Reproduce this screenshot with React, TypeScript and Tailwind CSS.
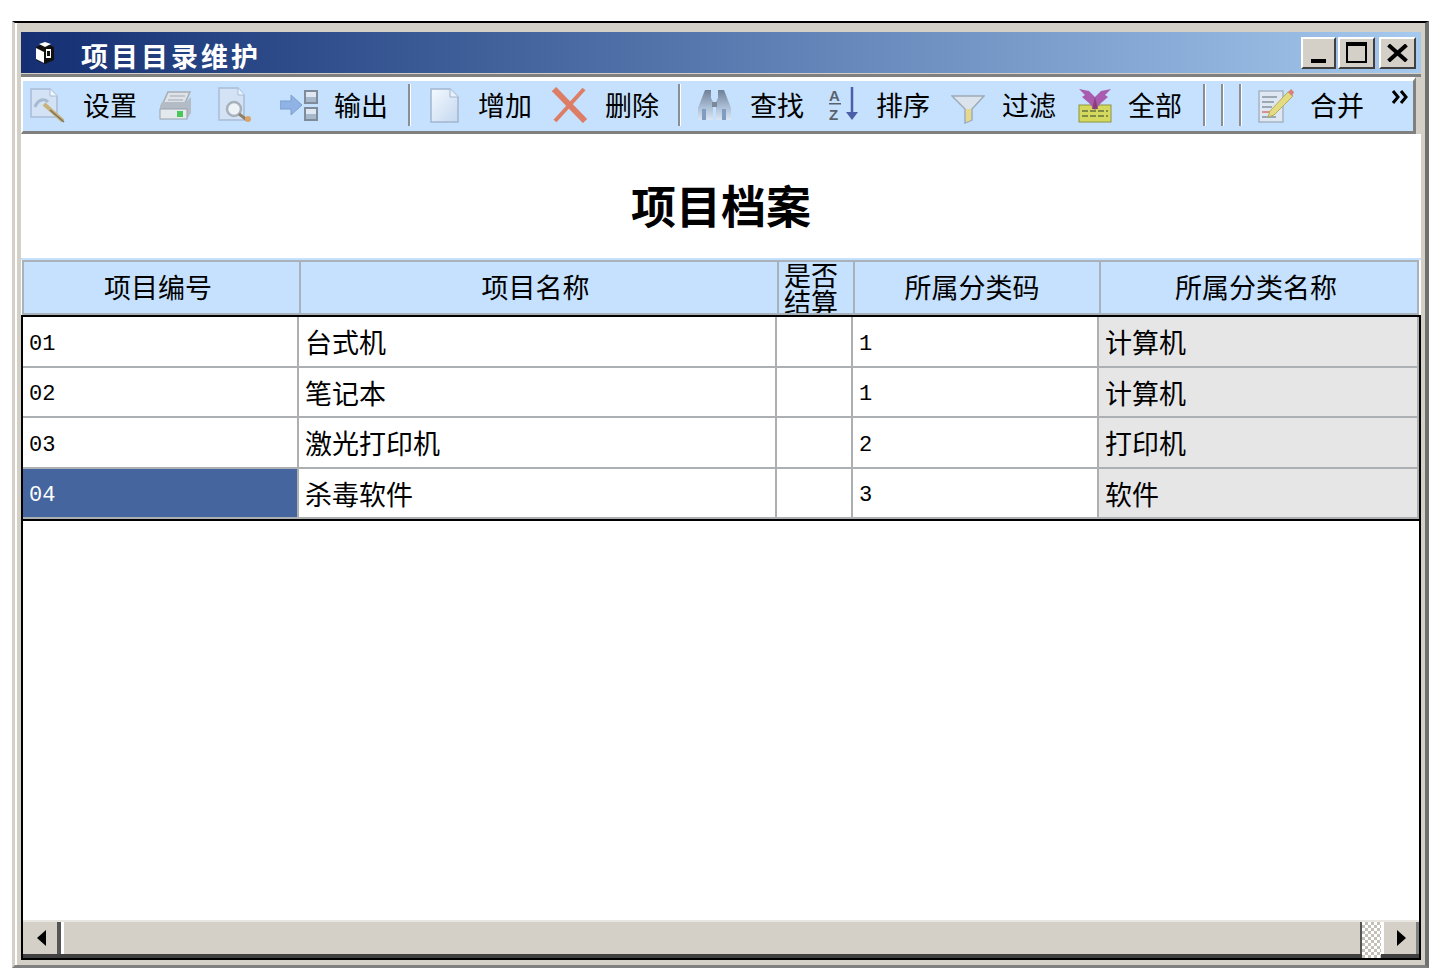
import React from "react";

const cjk = { fontFamily: '"Noto Sans CJK SC", "Liberation Sans", sans-serif' };

const Sep = ({ ml }: { ml: string }) => (
    <div className={`w-[3px] h-[42px] shrink-0 bg-[#8a8f96] border-r border-r-white -translate-y-[1px] ${ml}`} />
);

const Label = ({ ml, children }: { ml: string; children: React.ReactNode }) => (
    <span className={`text-[27px] leading-none w-[54px] shrink-0 text-black whitespace-nowrap -translate-y-[2px] ${ml}`}>{children}</span>
);

// 工具栏图标
const SetupIcon = () => (
    <svg viewBox="0 0 36 36" className="w-[36px] h-[36px] shrink-0 ml-[7px] -translate-y-[1px]">
        <path d="M1 2h19l7 7v21H1z" fill="#d3e3f5" stroke="#a9bcd6" strokeWidth="1.5" />
        <path d="M20 2v7h7" fill="#eef5fc" stroke="#a9bcd6" />
        <path d="M5 20c3-8 10-9 13-5" fill="none" stroke="#a8bad0" strokeWidth="3" />
        <path d="M14 17l19 17" stroke="#c7b27a" strokeWidth="4" />
        <path d="M20 23l14 12" stroke="#7a6f5a" strokeWidth="1.5" />
    </svg>
);

const PrinterIcon = () => (
    <svg viewBox="0 0 36 36" className="w-[36px] h-[36px] shrink-0 ml-[20px] -translate-y-[1px]">
        <path d="M11 5h22l-5 11H6z" fill="#dfe3e8" stroke="#a5adb6" strokeWidth="1.5" />
        <path d="M13 9h15M11 13h15" stroke="#b6bdc5" strokeWidth="1.5" />
        <path d="M5 15h24l5-5v16l-4 6H3V19z" fill="#b3bbc4" />
        <rect x="3" y="22" width="27" height="10" fill="#e4e9ee" stroke="#9aa3ad" />
        <rect x="20" y="24" width="6" height="6" fill="#4cc55a" />
    </svg>
);

const PreviewIcon = () => (
    <svg viewBox="0 0 36 36" className="w-[36px] h-[36px] shrink-0 ml-[25px] -translate-y-[1px]">
        <path d="M1 1h19l6 7v25H1z" fill="#d3e3f5" stroke="#a9bcd6" strokeWidth="1.5" />
        <path d="M20 1v7h6" fill="#eef5fc" stroke="#a9bcd6" />
        <circle cx="16" cy="22" r="7" fill="#eef3f8" stroke="#a7b1bc" strokeWidth="2.5" />
        <path d="M21 27l8 6" stroke="#8d7f68" strokeWidth="3" />
        <circle cx="30" cy="32" r="3" fill="#d9a36a" />
    </svg>
);

const ExportIcon = () => (
    <svg viewBox="0 0 38 36" className="w-[38px] h-[36px] shrink-0 ml-[26px] -translate-y-[1px]">
        <path d="M0 14h11V8l11 10-11 10v-6H0z" fill="#8fb3e4" stroke="#7f9ed0" />
        <rect x="25" y="4" width="12" height="12" fill="#dfe8f2" stroke="#7f8b98" strokeWidth="2" />
        <rect x="25" y="21" width="12" height="12" fill="#dfe8f2" stroke="#7f8b98" strokeWidth="2" />
        <rect x="26" y="10" width="10" height="5" fill="#a6b8cc" />
        <rect x="26" y="27" width="10" height="5" fill="#a6b8cc" />
    </svg>
);

const NewIcon = () => (
    <svg viewBox="0 0 30 36" className="w-[30px] h-[36px] shrink-0 ml-[19px] -translate-y-[1px]">
        <defs>
            <linearGradient id="newDoc" x1="0" y1="0" x2="1" y2="1">
                <stop offset="0" stopColor="#f4f9ff" />
                <stop offset="1" stopColor="#c4d8ef" />
            </linearGradient>
        </defs>
        <path d="M1 2h19l8 8v25H1z" fill="url(#newDoc)" stroke="#a3b6cf" strokeWidth="1.5" />
        <path d="M20 2v8h8" fill="#e8f1fb" stroke="#a3b6cf" />
    </svg>
);

const DeleteIcon = () => (
    <svg viewBox="0 0 36 36" className="w-[36px] h-[36px] shrink-0 ml-[20px] -translate-y-[1px]">
        <path d="M2 2l31 32" stroke="#dd7d66" strokeWidth="6" />
        <path d="M32 2L3 34" stroke="#dd7d66" strokeWidth="4" />
    </svg>
);

const FindIcon = () => (
    <svg viewBox="0 0 35 36" className="w-[35px] h-[36px] shrink-0 ml-[16px] -translate-y-[1px]">
        <defs>
            <linearGradient id="binoBody" x1="0" y1="0" x2="0" y2="1">
                <stop offset="0" stopColor="#6f8197" />
                <stop offset="0.55" stopColor="#a8bcd4" />
                <stop offset="1" stopColor="#dbe6f2" />
            </linearGradient>
        </defs>
        <path d="M8 3h6v8l2 4v18H1V21z" fill="url(#binoBody)" />
        <path d="M21 3h6l7 18v12H19V15l2-4z" fill="url(#binoBody)" />
        <path d="M5 22h4v11H5zM25 22h4v11h-4z" fill="#7f9cc2" />
        <rect x="15" y="15" width="5" height="5" fill="#7a889a" />
    </svg>
);

const SortIcon = () => (
    <svg viewBox="0 0 33 36" className="w-[33px] h-[36px] shrink-0 ml-[23px] -translate-y-[1px]">
        <text x="2" y="14" fontSize="15" fontWeight="700" fill="#59626c" fontFamily="Liberation Sans">A</text>
        <rect x="2" y="16" width="12" height="1.5" fill="#59626c" />
        <text x="2" y="33" fontSize="15" fontWeight="700" fill="#59626c" fontFamily="Liberation Sans">Z</text>
        <path d="M25 0v26" stroke="#4b5ea8" strokeWidth="2.5" />
        <path d="M19 25h12l-6 8z" fill="#4b5ea8" />
    </svg>
);

const FilterIcon = () => (
    <svg viewBox="0 0 34 36" className="w-[34px] h-[36px] shrink-0 ml-[21px]">
        <path d="M1 8h32L21 21v11l-7 3V21z" fill="#dbe4ec" stroke="#9eabb8" strokeWidth="1.5" />
        <path d="M15 21h5v11l-5 2z" fill="#e6d98a" />
    </svg>
);

const AllIcon = () => (
    <svg viewBox="0 0 34 36" className="w-[34px] h-[36px] shrink-0 ml-[22px] -translate-y-[1px]">
        <rect x="1" y="18" width="32" height="17" fill="#d4d95e" stroke="#8d9440" />
        <path d="M4 24h26M4 29h26" stroke="#7f8c46" strokeWidth="2" strokeDasharray="6 2" />
        <path d="M1 2l10 2 6 6 6-6 10-2-6 6 3 2-7 6-6 7-6-7-7-6 3-2z" fill="#a95bb0" />
        <path d="M17 10l3 12h-6z" fill="#8a3f7a" />
    </svg>
);

const MergeIcon = () => (
    <svg viewBox="0 0 36 36" className="w-[36px] h-[36px] shrink-0 ml-[16px] -translate-y-[1px]">
        <path d="M1 4h24v31H1z" fill="#dfe8f2" stroke="#a5b4c4" strokeWidth="1.5" />
        <path d="M4 10h15M4 15h12M4 20h10" stroke="#9ba8b6" strokeWidth="2" />
        <path d="M4 25h14" stroke="#d88f8f" strokeWidth="2" />
        <path d="M4 30h14" stroke="#9ba8b6" strokeWidth="2" />
        <path d="M12 24L30 5l5 4-19 19-6 2z" fill="#e4dc83" stroke="#b5ad5a" />
        <path d="M30 5l3-3 3 3-2 4z" fill="#d9807a" />
    </svg>
);

const WinBtn = ({ ml, children }: { ml?: string; children: React.ReactNode }) => (
    <div className={`h-[32px] flex items-center justify-center bg-[#d4d0c8] border-2 border-t-white border-l-white border-r-[#404040] border-b-[#404040] ${ml ?? ""}`}>
        {children}
    </div>
);

const headers = [
    { name: "项目编号", cls: "pr-[7px] pb-[3px]" },
    { name: "项目名称", cls: "pr-[7px] pb-[3px]" },
    { name: "是否 结算", cls: "pr-[10px]" },
    { name: "所属分类码", cls: "pr-[10px] pb-[3px]" },
    { name: "所属分类名称", cls: "pr-[6px] pb-[3px]" },
];

const rows = [
    { code: "01", name: "台式机", cat: "1", catName: "计算机", h: "h-[51px]" },
    { code: "02", name: "笔记本", cat: "1", catName: "计算机", h: "h-[50px]" },
    { code: "03", name: "激光打印机", cat: "2", catName: "打印机", h: "h-[51px]" },
    { code: "04", name: "杀毒软件", cat: "3", catName: "软件", h: "h-[50px]" },
];

const Cell = ({ className, children }: { className?: string; children?: React.ReactNode }) => (
    <div className={`flex items-center pl-[6px] border-r-2 border-b-2 border-[#adb0b3] overflow-hidden ${className ?? ""}`}>
        {children}
    </div>
);

const Code = ({ children }: { children: React.ReactNode }) => (
    <span className="text-[22px] leading-none translate-y-[3px]" style={{ fontFamily: '"Liberation Mono", monospace' }}>{children}</span>
);

const App = () => {
    return (
        <div className="w-[1442px] h-[980px] bg-white pt-[21px] pl-[12px] text-black" style={cjk}>
            <div className="w-[1417px] h-[947px] flex flex-col bg-[#d4d0c8] border-t-2 border-t-black border-l-[3px] border-l-[#d4d0c8] border-r-4 border-r-[#707070] border-b-[3px] border-b-[#808080]">
                <div className="flex-1 min-h-0 flex flex-col border-l-2 border-l-white pl-[4px] pr-[4px] pt-[9px] pb-[5px]">
                    {/* 标题栏 */}
                    <div className="h-[41px] shrink-0 flex items-center pl-[12px] pr-[5px] bg-gradient-to-r from-[#152f72] to-[#a6c9ee]">
                        <svg viewBox="0 0 24 24" className="w-[24px] h-[24px] shrink-0">
                            <path d="M3 6l9-4 9 4v13l-9 4-9-4z" fill="#111" />
                            <path d="M3 7l8 4v11l-8-4zM6 3l6-2 6 2-6 3z" fill="#fff" />
                            <path d="M13 8h5v9h-5z" fill="#fff" />
                            <path d="M14 10h3v5h-3z" fill="#111" />
                        </svg>
                        <span className="ml-[24px] text-[27px] leading-none font-bold tracking-[3px] text-white whitespace-nowrap translate-y-[3px]">项目目录维护</span>
                        <div className="ml-auto flex">
                            <WinBtn>
                                <div className="w-[35px] h-[32px] -m-[2px] flex items-end justify-center pb-[6px]">
                                    <div className="w-[15px] h-[4px] bg-black" />
                                </div>
                            </WinBtn>
                            <WinBtn ml="ml-[2px]">
                                <div className="w-[33px] flex justify-center">
                                    <div className="w-[21px] h-[21px] border-2 border-t-4 border-black" />
                                </div>
                            </WinBtn>
                            <WinBtn ml="ml-[4px]">
                                <svg viewBox="0 0 22 18" className="w-[33px] h-[18px] px-[5px]">
                                    <path d="M2 1l18 16M20 1L2 17" stroke="#000" strokeWidth="4" />
                                </svg>
                            </WinBtn>
                        </div>
                    </div>
                    <div className="h-[3px] shrink-0 bg-[#808080] mt-[1px]" />

                    {/* 工具栏 */}
                    <div className="h-[57px] shrink-0 w-[1395px] flex items-center bg-[#c5e1fd] border-t-4 border-t-white border-l-2 border-l-white border-r-[3px] border-r-[#808080] border-b-[3px] border-b-[#808080]">
                        <SetupIcon />
                        <Label ml="ml-[17px]">设置</Label>
                        <PrinterIcon />
                        <PreviewIcon />
                        <ExportIcon />
                        <Label ml="ml-[16px]">输出</Label>
                        <Sep ml="ml-[20px]" />
                        <NewIcon />
                        <Label ml="ml-[18px]">增加</Label>
                        <DeleteIcon />
                        <Label ml="ml-[17px]">删除</Label>
                        <Sep ml="ml-[19px]" />
                        <FindIcon />
                        <Label ml="ml-[18px]">查找</Label>
                        <SortIcon />
                        <Label ml="ml-[16px]">排序</Label>
                        <FilterIcon />
                        <Label ml="ml-[17px]">过滤</Label>
                        <AllIcon />
                        <Label ml="ml-[16px]">全部</Label>
                        <Sep ml="ml-[21px]" />
                        <Sep ml="ml-[15px]" />
                        <Sep ml="ml-[15px]" />
                        <MergeIcon />
                        <Label ml="ml-[16px]">合并</Label>
                        <svg viewBox="0 0 18 14" className="w-[18px] h-[14px] shrink-0 ml-[27px] self-start mt-[9px]">
                            <path d="M2 1l5 6-5 6M10 1l5 6-5 6" fill="none" stroke="#000" strokeWidth="3" />
                        </svg>
                    </div>

                    {/* 内容 */}
                    <div className="flex-1 min-h-0 flex flex-col bg-white">
                        <div className="h-[124px] shrink-0 flex items-center justify-center pt-[16px]">
                            <h1 className="text-[45px] leading-none font-bold">项目档案</h1>
                        </div>

                        {/* 表头 */}
                        <div className="h-[57px] shrink-0 pl-[1px] pr-[2px] border-t-2 border-t-[#c5e1fd]">
                            <div className="h-[55px] grid grid-cols-[277px_478px_76px_246px_1fr] bg-[#c5e1fd] border-t-2 border-l-2 border-r-2 border-b-2 border-[#a9b1b9]">
                                {headers.map((h, i) => (
                                    <div
                                        key={h.name}
                                        className={`flex items-center justify-center overflow-hidden text-[27px] ${h.cls} ${i < 4 ? "border-r-2 border-[#a9b1b9]" : ""}`}
                                    >
                                        {i === 2 ? (
                                            <div className="w-[54px] shrink-0 text-center leading-[27px]">是否<br />结算</div>
                                        ) : (
                                            <span className="leading-none whitespace-nowrap">{h.name}</span>
                                        )}
                                    </div>
                                ))}
                            </div>
                        </div>

                        {/* 表格 */}
                        <div className="flex-1 min-h-0 flex flex-col border-2 border-black">
                            <div className="flex-1 min-h-0">
                                <div className="border-b-2 border-black">
                                    {rows.map((row, i) => (
                                        <div key={row.code} className={`grid grid-cols-[276px_478px_76px_246px_1fr] text-[27px] ${row.h}`}>
                                            <Cell className={i === 3 ? "bg-[#44659d] text-white" : ""}><Code>{row.code}</Code></Cell>
                                            <Cell><span className="leading-none whitespace-nowrap">{row.name}</span></Cell>
                                            <Cell />
                                            <Cell><Code>{row.cat}</Code></Cell>
                                            <Cell className="bg-[#e6e6e6] border-r-0"><span className="leading-none whitespace-nowrap">{row.catName}</span></Cell>
                                        </div>
                                    ))}
                                </div>
                            </div>

                            {/* 滚动条 */}
                            <div className="h-[38px] shrink-0 flex bg-[#d4d0c8] border-t-2 border-t-[#e8e6e0] border-b-4 border-b-[#404040] pl-[3px]">
                                <div className="w-[31px] flex items-center justify-center">
                                    <svg viewBox="0 0 9 16" className="w-[9px] h-[16px]"><path d="M9 0v16L0 8z" fill="#000" /></svg>
                                </div>
                                <div className="w-[4px] bg-[#555]" />
                                <div className="w-[1301px] border-l-[3px] border-l-white border-r-2 border-r-[#555]" />
                                <div className="flex-1 min-w-0 flex">
                                    <div className="w-[19px] -mb-[4px] bg-[length:6px_6px] bg-[conic-gradient(#c4c0b8_25%,#ffffff_0_50%,#c4c0b8_0_75%,#ffffff_0)]" />
                                    <div className="flex-1 flex items-center justify-center border-l-[3px] border-l-white border-r-[3px] border-r-[#808080] pl-[2px]">
                                        <svg viewBox="0 0 9 16" className="w-[9px] h-[16px]"><path d="M0 0v16L9 8z" fill="#000" /></svg>
                                    </div>
                                </div>
                            </div>
                        </div>
                    </div>
                </div>
            </div>
        </div>
    );
};

export default App;
